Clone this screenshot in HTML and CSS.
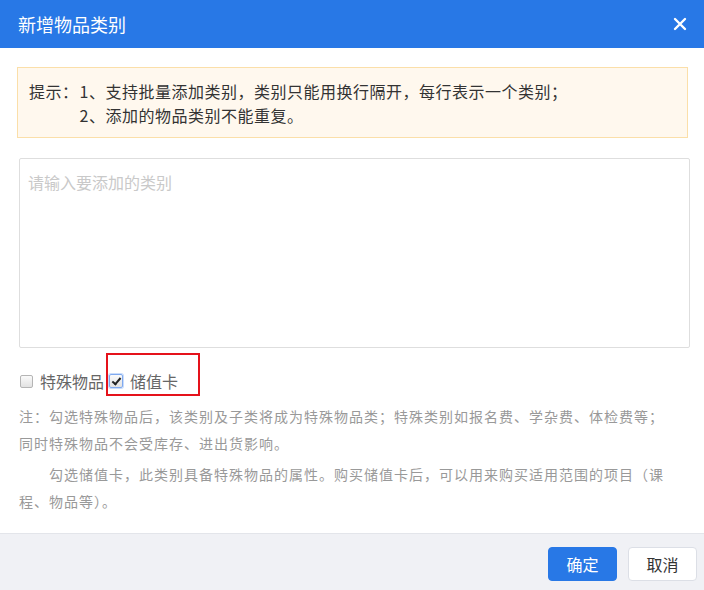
FILE: index.html
```html
<!DOCTYPE html>
<html lang="zh-CN">
<head>
    <meta charset="UTF-8">
    <meta name="viewport" content="width=device-width, initial-scale=1.0">
    <title>新增物品类别</title>
    <link rel="stylesheet" href="styles.css">
</head>
<body>

    <div class="dialog">
        <!-- Header -->
        <div class="dialog-header">
            <span class="dialog-title">新增物品类别</span>
            <span class="dialog-close">
                <svg width="14" height="14" viewBox="0 0 14 14">
                    <path d="M2 2 L12 12 M12 2 L2 12" stroke="#fff" stroke-width="2.4" stroke-linecap="round" fill="none"/>
                </svg>
            </span>
        </div>

        <!-- Body -->
        <div class="dialog-body">
            <div class="tip">
                <span class="tip-label">提示：</span>
                <div class="tip-list">
                    <p>1、支持批量添加类别，类别只能用换行隔开，每行表示一个类别；</p>
                    <p>2、添加的物品类别不能重复。</p>
                </div>
            </div>

            <textarea class="category-input" placeholder="请输入要添加的类别"></textarea>

            <div class="check-row">
                <label class="check"><input type="checkbox"><span>特殊物品</span></label>
                <label class="check"><input type="checkbox" class="focused" checked><span>储值卡</span></label>
                <span class="highlight-box"></span>
            </div>

            <p class="note">注：勾选特殊物品后，该类别及子类将成为特殊物品类；特殊类别如报名费、学杂费、体检费等；<br>同时特殊物品不会受库存、进出货影响。</p>
            <p class="note note-indent">勾选储值卡，此类别具备特殊物品的属性。购买储值卡后，可以用来购买适用范围的项目（课程、物品等）。</p>
        </div>

        <!-- Footer -->
        <div class="dialog-footer">
            <button class="btn btn-primary">确定</button>
            <button class="btn">取消</button>
        </div>
    </div>

</body>
</html>
```

FILE: styles.css
```css
body {
    margin: 0;
    font-family: "Noto Sans CJK SC", "Noto Sans", sans-serif;
    background-color: #fff;
    color: #333;
}

.dialog {
    width: 704px;
    height: 590px;
    display: flex;
    flex-direction: column;
}

.dialog-header {
    height: 48px;
    background-color: #2878e6;
    display: flex;
    align-items: center;
    justify-content: space-between;
    padding: 0 17px 0 18px;
}

.dialog-title {
    color: #fff;
    font-size: 18px;
}

.dialog-close {
    display: flex;
    width: 14px;
    height: 14px;
}

.dialog-body {
    flex: 1;
    padding: 19px 16px 0 17px;
}

.tip {
    display: flex;
    height: 69px;
    padding: 0 11px;
    background-color: #fff8ee;
    border: 1px solid #fbdfa9;
    font-size: 16px;
    letter-spacing: 0.5px;
    line-height: 24px;
    align-items: center;
}

.tip-label {
    align-self: center;
    margin-top: -24px;
    margin-right: 1px;
}

.tip-list p {
    margin: 0;
}

.category-input {
    display: block;
    box-sizing: border-box;
    width: 671px;
    height: 190px;
    margin: 20px 0 0 2px;
    padding: 11px 8px;
    border: 1px solid #dedede;
    border-radius: 2px;
    font-family: inherit;
    font-size: 16px;
    line-height: 24px;
    resize: none;
    outline: none;
}

.category-input::placeholder {
    color: #c9c9c9;
}

.check-row {
    position: relative;
    display: flex;
    align-items: center;
    height: 24px;
    margin-top: 21px;
    padding-left: 3px;
    font-size: 16px;
    color: #666;
}

.check {
    display: flex;
    align-items: center;
}

.check input {
    appearance: none;
    box-sizing: border-box;
    width: 13px;
    height: 13px;
    margin: 0 7px 0 0;
    border: 1px solid #b5b5b5;
    border-radius: 2px;
    background: linear-gradient(#fafafa, #e2e2e2);
    position: relative;
}

.check + .check input {
    margin-left: 5px;
    width: 14px;
    height: 14px;
}

.check input.focused {
    border-color: #7fa9ef;
    box-shadow: 0 0 0 1px #c9dcfb;
}

.check input:checked::after {
    content: "";
    position: absolute;
    left: 4px;
    top: 1px;
    width: 3px;
    height: 7px;
    border-right: 2px solid #222;
    border-bottom: 2px solid #222;
    transform: rotate(40deg);
}

.highlight-box {
    position: absolute;
    left: 89px;
    top: -16px;
    width: 90px;
    height: 39px;
    border: 2px solid #e5121b;
}

.note {
    width: 655px;
    margin: 10px 0 0 2px;
    font-size: 14px;
    letter-spacing: 1px;
    line-height: 27px;
    color: #999;
}

.note-indent {
    margin-top: 4px;
    text-indent: 30px;
}

.dialog-footer {
    height: 57px;
    border-top: 1px solid #e3e5ea;
    background-color: #f0f1f5;
    display: flex;
    justify-content: flex-end;
    align-items: flex-start;
    gap: 11px;
    padding: 13px 7px 0 0;
    box-sizing: border-box;
}

.btn {
    width: 69px;
    height: 34px;
    font-family: inherit;
    font-size: 16px;
    color: #333;
    background-color: #fff;
    border: 1px solid #dcdfe6;
    border-radius: 4px;
    cursor: pointer;
}

.btn-primary {
    color: #fff;
    background-color: #2878e6;
    border-color: #2878e6;
}
```
